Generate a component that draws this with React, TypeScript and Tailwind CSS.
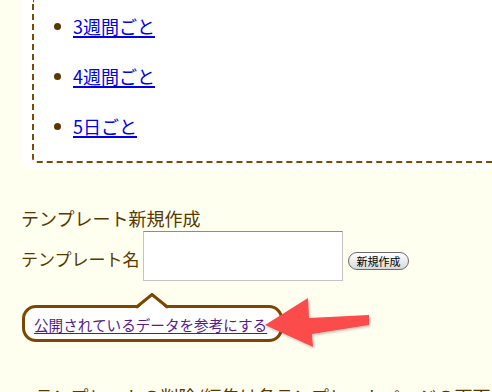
import React from "react";

// ─── Template settings fragment ───────────────────────────────────────────────
// Tail of the interval list, the "new template" form and a hint bubble
// pointing at the public-data link.

const INTERVALS = ["3週間ごと", "4週間ごと", "5日ごと"];

export default function App() {
  return (
    <div
      className="relative w-[492px] h-[392px] overflow-hidden bg-[#fffff0] text-[#583700]"
      style={{ fontFamily: '"Noto Sans CJK JP", "Liberation Sans", sans-serif' }}
    >
      {/* ── Interval list panel (top cut off) ── */}
      <div className="ml-[22px] w-[520px] bg-white rounded-bl-[10px] pl-[10px] pb-[6px]">
        <div className="border-2 border-t-0 border-dashed border-[#804a00] rounded-bl-[5px] pt-[14px] pb-[23px]">
          <ul className="flex flex-col gap-[26px]">
            {INTERVALS.map((label) => (
              <li key={label} className="flex items-center h-[24px] pl-[20px]">
                <span className="w-[7px] h-[7px] rounded-full bg-[#5a3800] shrink-0" />
                <a
                  href="#"
                  className="ml-[12px] text-[18px] leading-[24px] text-[#0000ee] underline underline-offset-[2px] decoration-[2px]"
                >
                  {label}
                </a>
              </li>
            ))}
          </ul>
        </div>
      </div>

      {/* ── New template form ── */}
      <h2 className="mt-[37px] ml-[21px] text-[18px] leading-[24px] font-normal">
        テンプレート新規作成
      </h2>
      <div className="mt-[1px] ml-[21px] flex items-start">
        <label className="w-[122px] mt-[18px] text-[17px] leading-[20px]">テンプレート名</label>
        <input
          type="text"
          className="w-[200px] h-[50px] bg-white border border-[#c4c4c4] border-t-[#8c8c8c] outline-none"
        />
        <button className="ml-[5px] mt-[21px] w-[61px] h-[18px] rounded-full border border-[#6a6a6a] bg-gradient-to-b from-white to-[#d9d9d9] text-[11px] leading-[14px] text-black">
          新規作成
        </button>
      </div>

      {/* ── Hint bubble ── */}
      <div className="relative mt-[24px] ml-[22px] w-[261px] h-[37px] rounded-[14px] border-[3px] border-[#7c4700] bg-white flex items-center pl-[9px] pt-[3px]">
        <svg
          className="absolute left-[111px] -top-[15px]"
          width="32"
          height="16"
          viewBox="0 0 32 16"
        >
          <polygon points="2,15 16,1.5 30,15" fill="white" />
          <polyline points="0,14.5 16,1.5 32,14.5" fill="none" stroke="#7c4700" strokeWidth="3" />
        </svg>
        <a href="#" className="text-[14.6px] leading-[20px] text-[#551a8b] underline underline-offset-[2px]">
          公開されているデータを参考にする
        </a>
      </div>

      {/* ── Next paragraph (cut off) ── */}
      <p className="mt-[42px] ml-[35px] whitespace-nowrap text-[18px] leading-[24px]">
        テンプレートの削除/編集は各テンプレートページの画面から行えます。
      </p>

      {/* ── Red pointer arrow ── */}
      <svg
        className="absolute left-0 top-0 pointer-events-none"
        width="492"
        height="392"
        viewBox="0 0 492 392"
      >
        <defs>
          <filter id="sh" x="-20%" y="-20%" width="140%" height="140%">
            <feDropShadow dx="1" dy="1.5" stdDeviation="1.2" floodColor="#000" floodOpacity="0.25" />
          </filter>
        </defs>
        <polygon
          points="265,325 308,298 309,318 369,315 369,325 312,334 313,347"
          fill="#fc4b4b"
          filter="url(#sh)"
        />
      </svg>
    </div>
  );
}
